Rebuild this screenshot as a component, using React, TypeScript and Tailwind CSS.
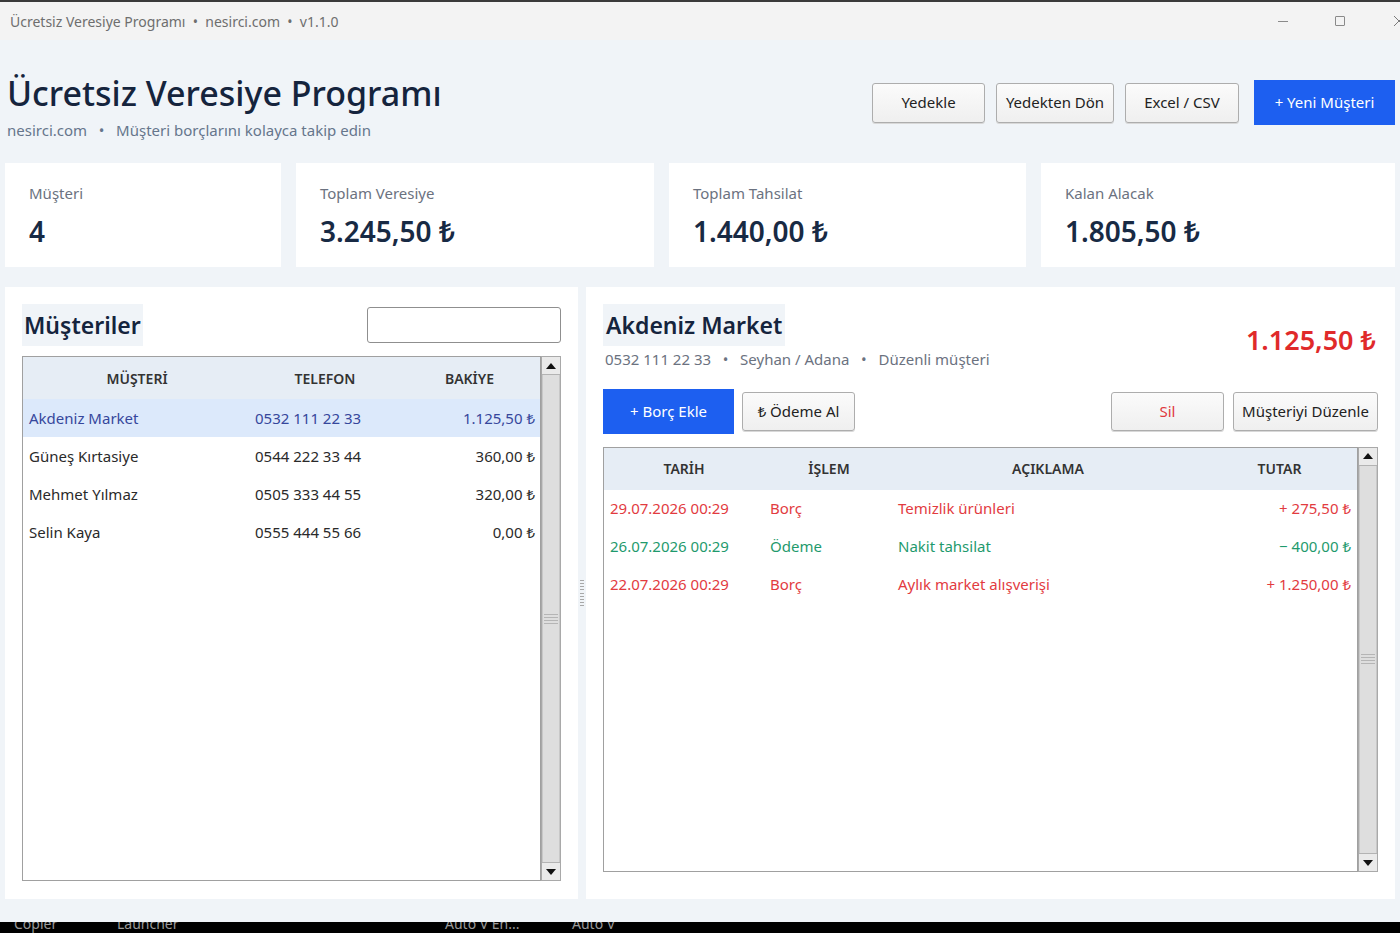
import React from "react";

const font = { fontFamily: '"Noto Sans", "Open Sans", Arial, sans-serif' };

function GrayBtn({ children, className = "" }: { children: React.ReactNode; className?: string }) {
  return (
    <div
      className={
        "flex items-center justify-center rounded-[3px] border border-[#adadad] bg-gradient-to-b from-[#fbfbfb] to-[#efefef] text-[15px] text-[#222] shadow-[0_1px_0_#d8d8d8] " +
        className
      }
    >
      {children}
    </div>
  );
}

function Triangle({ up }: { up: boolean }) {
  return (
    <svg width="10" height="6" viewBox="0 0 10 6">
      {up ? <polygon points="0,6 10,6 5,0" fill="#111" /> : <polygon points="0,0 10,0 5,6" fill="#111" />}
    </svg>
  );
}

function ScrollBar() {
  return (
    <div className="flex w-[20px] flex-col border border-[#a9a9a9] bg-[#dcdcdc]">
      <div className="flex h-[18px] items-center justify-center border-b border-[#b3b3b3] bg-[#eaeaea]">
        <Triangle up />
      </div>
      <div className="flex flex-1 flex-col items-center justify-center border-x border-[#c8c8c8] bg-[#dedede]">
        <div className="flex w-[14px] flex-col gap-[2px]">
          <div className="h-px bg-[#b5b5b5]" />
          <div className="h-px bg-[#b5b5b5]" />
          <div className="h-px bg-[#b5b5b5]" />
          <div className="h-px bg-[#b5b5b5]" />
        </div>
      </div>
      <div className="flex h-[18px] items-center justify-center border-t border-[#b3b3b3] bg-[#eaeaea]">
        <Triangle up={false} />
      </div>
    </div>
  );
}

const customers = [
  { name: "Akdeniz Market", phone: "0532 111 22 33", bal: "1.125,50 ₺", sel: true },
  { name: "Güneş Kırtasiye", phone: "0544 222 33 44", bal: "360,00 ₺" },
  { name: "Mehmet Yılmaz", phone: "0505 333 44 55", bal: "320,00 ₺" },
  { name: "Selin Kaya", phone: "0555 444 55 66", bal: "0,00 ₺" },
];

const txs = [
  { d: "29.07.2026 00:29", t: "Borç", a: "Temizlik ürünleri", v: "+ 275,50 ₺", red: true },
  { d: "26.07.2026 00:29", t: "Ödeme", a: "Nakit tahsilat", v: "− 400,00 ₺", red: false },
  { d: "22.07.2026 00:29", t: "Borç", a: "Aylık market alışverişi", v: "+ 1.250,00 ₺", red: true },
];

export default function App() {
  return (
    <div style={font} className="relative flex h-[933px] w-[1400px] flex-col overflow-hidden bg-[#f0f4f8]">
      {/* title bar */}
      <div className="flex h-[40px] items-center border-t-2 border-[#3a3a3a] bg-[#f3f3f3]">
        <div className="pl-[10px] text-[14px] text-[#6e6e6e]">
          Ücretsiz Veresiye Programı&nbsp;&nbsp;•&nbsp;&nbsp;nesirci.com&nbsp;&nbsp;•&nbsp;&nbsp;v1.1.0
        </div>
        <div className="ml-auto flex items-center">
          <div className="flex w-[57px] justify-center">
            <div className="h-px w-[10px] bg-[#8a8a8a]" />
          </div>
          <div className="flex w-[57px] justify-center">
            <div className="h-[10px] w-[10px] rounded-[1px] border border-[#8a8a8a]" />
          </div>
          <div className="flex w-[32px] justify-end overflow-hidden">
            <svg width="12" height="12" viewBox="0 0 12 12" className="mr-[-5px]">
              <path d="M1 1 L11 11 M11 1 L1 11" stroke="#7a7a7a" strokeWidth="1" />
            </svg>
          </div>
        </div>
      </div>

      {/* header */}
      <div className="flex h-[123px] items-start px-[5px]">
        <div className="pl-[2px] pt-[31px]">
          <div className="text-[34px] font-medium leading-[44px] text-[#15243d]">Ücretsiz Veresiye Programı</div>
          <div className="mt-[4px] text-[15px] text-[#66768c]">
            nesirci.com&nbsp;&nbsp;&nbsp;•&nbsp;&nbsp;&nbsp;Müşteri borçlarını kolayca takip edin
          </div>
        </div>
        <div className="ml-auto flex items-center pt-[40px]">
          <GrayBtn className="mr-[11px] h-[40px] w-[113px]">Yedekle</GrayBtn>
          <GrayBtn className="mr-[11px] h-[40px] w-[118px]">Yedekten Dön</GrayBtn>
          <GrayBtn className="mr-[15px] h-[40px] w-[114px]">Excel / CSV</GrayBtn>
          <div className="flex h-[45px] w-[141px] items-center justify-center bg-[#1d5ff0] text-[15px] text-white">
            + Yeni Müşteri
          </div>
        </div>
      </div>

      {/* stats */}
      <div className="flex h-[104px] gap-[15px] px-[5px]">
        {[
          { l: "Müşteri", v: "4", w: "w-[276px]" },
          { l: "Toplam Veresiye", v: "3.245,50 ₺", w: "w-[358px]" },
          { l: "Toplam Tahsilat", v: "1.440,00 ₺", w: "w-[357px]" },
          { l: "Kalan Alacak", v: "1.805,50 ₺", w: "flex-1" },
        ].map((s) => (
          <div key={s.l} className={"flex flex-col bg-white pl-[24px] pt-[19px] " + s.w}>
            <div className="text-[15px] leading-[22px] text-[#6b7280]">{s.l}</div>
            <div className="mt-[8px] text-[28px] font-semibold leading-[38px] text-[#182a44]">{s.v}</div>
          </div>
        ))}
      </div>

      {/* panels */}
      <div className="mt-[20px] flex h-[612px] px-[5px]">
        {/* left */}
        <div className="flex w-[573px] flex-col bg-white px-[17px] pt-[17px] pb-[18px]">
          <div className="flex h-[42px] items-center justify-between">
            <div className="flex h-[42px] items-center bg-[#f0f4f8] px-[2px] text-[23px] font-semibold text-[#15243d]">
              Müşteriler
            </div>
            <div className="h-[36px] w-[194px] rounded-[3px] border border-[#8f8f8f] bg-white" />
          </div>
          <div className="mt-[10px] flex flex-1">
            <div className="flex flex-1 flex-col border border-[#a0a0a0] bg-white">
              <div className="flex h-[42px] items-center bg-[#e6edf5] text-[14px] font-semibold text-[#333]">
                <div className="w-[228px] text-center">MÜŞTERİ</div>
                <div className="w-[148px] text-center">TELEFON</div>
                <div className="flex-1 text-center">BAKİYE</div>
              </div>
              {customers.map((c) => (
                <div
                  key={c.name}
                  className={
                    "flex h-[38px] items-center text-[15px] " +
                    (c.sel ? "bg-[#dce9fb] text-[#36479c]" : "text-[#2a2a2a]")
                  }
                >
                  <div className="w-[228px] pl-[6px]">{c.name}</div>
                  <div className="w-[148px] pl-[4px]">{c.phone}</div>
                  <div className="flex-1 pr-[5px] text-right">{c.bal}</div>
                </div>
              ))}
            </div>
            <ScrollBar />
          </div>
        </div>

        {/* sash */}
        <div className="flex w-[8px] items-center justify-center">
          <div className="flex h-[26px] w-[4px] flex-col justify-between">
            {Array.from({ length: 9 }).map((_, i) => (
              <div key={i} className="h-px bg-[#a8a8a8]" />
            ))}
          </div>
        </div>

        {/* right */}
        <div className="flex flex-1 flex-col bg-white pl-[17px] pr-[17px] pt-[17px] pb-[27px]">
          <div className="flex items-start justify-between">
            <div>
              <div className="flex h-[42px] w-fit items-center bg-[#f0f4f8] px-[3px] text-[23px] font-semibold text-[#15243d]">
                Akdeniz Market
              </div>
              <div className="mt-[2px] pl-[2px] text-[15px] text-[#6b7280]">
                0532 111 22 33&nbsp;&nbsp;&nbsp;•&nbsp;&nbsp;&nbsp;Seyhan / Adana&nbsp;&nbsp;&nbsp;•&nbsp;&nbsp;&nbsp;Düzenli müşteri
              </div>
            </div>
            <div className="pr-[2px] pt-[17px] text-[27px] font-semibold leading-[38px] text-[#e02a2a]">1.125,50 ₺</div>
          </div>
          <div className="mt-[18px] flex h-[45px] items-center">
            <div className="flex h-[45px] w-[131px] items-center justify-center bg-[#1d5ff0] text-[15px] text-white">
              + Borç Ekle
            </div>
            <GrayBtn className="ml-[8px] h-[39px] w-[113px]">₺ Ödeme Al</GrayBtn>
            <GrayBtn className="ml-auto h-[39px] w-[113px] !text-[#e0393e]">Sil</GrayBtn>
            <GrayBtn className="ml-[9px] h-[39px] w-[145px]">Müşteriyi Düzenle</GrayBtn>
          </div>
          <div className="mt-[13px] flex flex-1">
            <div className="flex flex-1 flex-col border border-[#a0a0a0] bg-white">
              <div className="flex h-[42px] items-center bg-[#e6edf5] text-[14px] font-semibold text-[#333]">
                <div className="w-[160px] text-center">TARİH</div>
                <div className="w-[130px] text-center">İŞLEM</div>
                <div className="w-[308px] text-center">AÇIKLAMA</div>
                <div className="flex-1 text-center">TUTAR</div>
              </div>
              {txs.map((t) => (
                <div
                  key={t.d}
                  className={"flex h-[38px] items-center text-[15px] " + (t.red ? "text-[#e23b3f]" : "text-[#1f9a6d]")}
                >
                  <div className="w-[160px] pl-[6px]">{t.d}</div>
                  <div className="w-[130px] pl-[6px]">{t.t}</div>
                  <div className="w-[308px] pl-[4px]">{t.a}</div>
                  <div className="flex-1 pr-[6px] text-right">{t.v}</div>
                </div>
              ))}
            </div>
            <ScrollBar />
          </div>
        </div>
      </div>

      {/* bottom gap */}
      <div className="h-[23px]" />

      {/* taskbar */}
      <div className="relative h-[11px] overflow-hidden bg-black text-[14px] text-[#9a9a9a]">
        <div className="absolute top-[-9px] left-[14px]">Copier</div>
        <div className="absolute top-[-9px] left-[117px]">Launcher</div>
        <div className="absolute top-[-9px] left-[445px]">Auto V En...</div>
        <div className="absolute top-[-9px] left-[572px]">Auto V</div>
      </div>
    </div>
  );
}
